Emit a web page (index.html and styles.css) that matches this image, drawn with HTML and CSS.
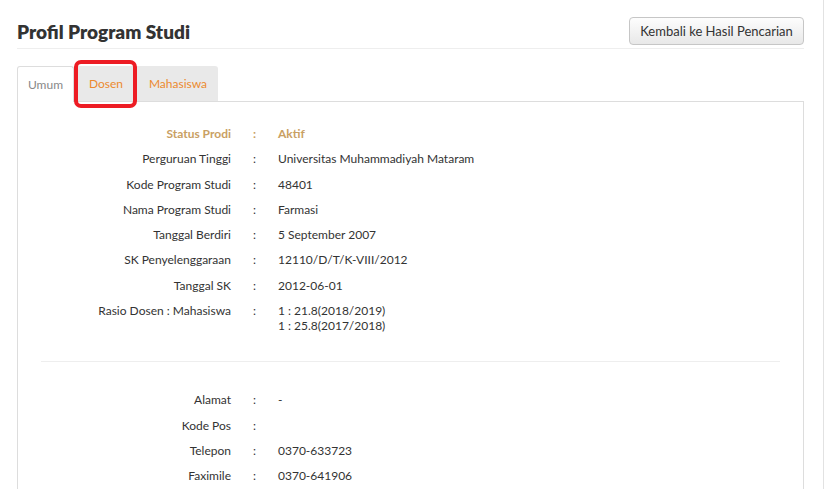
FILE: index.html
```html
<!DOCTYPE html>
<html lang="id">
<head>
    <meta charset="UTF-8">
    <title>Profil Program Studi</title>
    <link rel="stylesheet" href="styles.css">
</head>
<body>
<div class="frame">
    <div class="page">
        <div class="page-header">
            <h2>Profil Program Studi</h2>
            <button class="btn">Kembali ke Hasil Pencarian</button>
        </div>

        <ul class="tabs">
            <li class="tab active">Umum</li>
            <li class="tab marked">Dosen<span class="mark"></span></li>
            <li class="tab wide">Mahasiswa</li>
        </ul>

        <div class="panel">
            <div class="info">
                <div class="lbl status">Status Prodi</div><div class="sep status">:</div><div class="val status">Aktif</div>
                <div class="lbl">Perguruan Tinggi</div><div class="sep">:</div><div class="val">Universitas Muhammadiyah Mataram</div>
                <div class="lbl">Kode Program Studi</div><div class="sep">:</div><div class="val">48401</div>
                <div class="lbl">Nama Program Studi</div><div class="sep">:</div><div class="val">Farmasi</div>
                <div class="lbl">Tanggal Berdiri</div><div class="sep">:</div><div class="val">5 September 2007</div>
                <div class="lbl">SK Penyelenggaraan</div><div class="sep">:</div><div class="val">12110/D/T/K-VIII/2012</div>
                <div class="lbl">Tanggal SK</div><div class="sep">:</div><div class="val">2012-06-01</div>
                <div class="lbl">Rasio Dosen : Mahasiswa</div><div class="sep">:</div><div class="val">1 : 21.8(2018/2019)<br>1 : 25.8(2017/2018)</div>
            </div>

            <hr class="divider">

            <div class="info">
                <div class="lbl">Alamat</div><div class="sep">:</div><div class="val">-</div>
                <div class="lbl">Kode Pos</div><div class="sep">:</div><div class="val"></div>
                <div class="lbl">Telepon</div><div class="sep">:</div><div class="val">0370-633723</div>
                <div class="lbl">Faximile</div><div class="sep">:</div><div class="val">0370-641906</div>
            </div>
        </div>
    </div>
</div>
</body>
</html>
```

FILE: styles.css
```css
html, body {
    margin: 0;
    padding: 0;
    background: #fff;
}
body {
    font-family: Lato, "Liberation Sans", sans-serif;
    font-size: 12px;
    color: #333;
    overflow: hidden;
}
.frame {
    width: 823px;
    min-height: 100vh;
    border-right: 1px solid #e2e2e2;
}
.page {
    width: 787px;
    margin-left: 17px;
}
.page-header {
    display: flex;
    justify-content: space-between;
    align-items: center;
    padding-top: 17px;
    padding-bottom: 3px;
    border-bottom: 1px solid #eee;
}
.page-header h2 {
    margin: 0;
    font-size: 19px;
    font-weight: 800;
    color: #333;
}
.btn {
    height: 28px;
    width: 175px;
    font-family: Lato, "Liberation Sans", sans-serif;
    font-size: 13px;
    color: #333;
    background: linear-gradient(#fdfdfd, #e8e8e8);
    border: 1px solid #c6c6c6;
    border-radius: 4px;
    padding: 0;
}
.tabs {
    list-style: none;
    display: flex;
    margin: 17px 0 0;
    padding: 0;
    height: 35px;
}
.tab {
    position: relative;
    box-sizing: border-box;
    height: 35px;
    line-height: 35px;
    text-align: center;
    background: #e9e9e9;
    color: #ec8a2f;
    width: 64px;
}
.tab.wide {
    width: 80px;
    border-top-right-radius: 3px;
}
.tab.active {
    width: 57px;
    background: #fff;
    color: #888;
    border: 1px solid #ddd;
    border-bottom: none;
    height: 36px;
    border-top-left-radius: 3px;
    border-top-right-radius: 3px;
    z-index: 1;
}
.mark {
    position: absolute;
    left: 0;
    right: 1px;
    top: -6px;
    bottom: -7px;
    border: 4px solid #ed1c24;
    border-radius: 7px;
    z-index: 2;
}
.panel {
    border: 1px solid #ddd;
    padding: 19px 23px 40px;
}
.info {
    display: grid;
    grid-template-columns: 190px 47px 1fr;
}
.info > div {
    padding: 5px 0 5.3px;
    line-height: 15px;
}
.lbl {
    text-align: right;
}
.sep {
    text-align: center;
}
.status {
    color: #c9a063;
    font-weight: bold;
}
.divider {
    border: 0;
    border-top: 1px solid #eee;
    margin: 23px 0 25px;
}
```
